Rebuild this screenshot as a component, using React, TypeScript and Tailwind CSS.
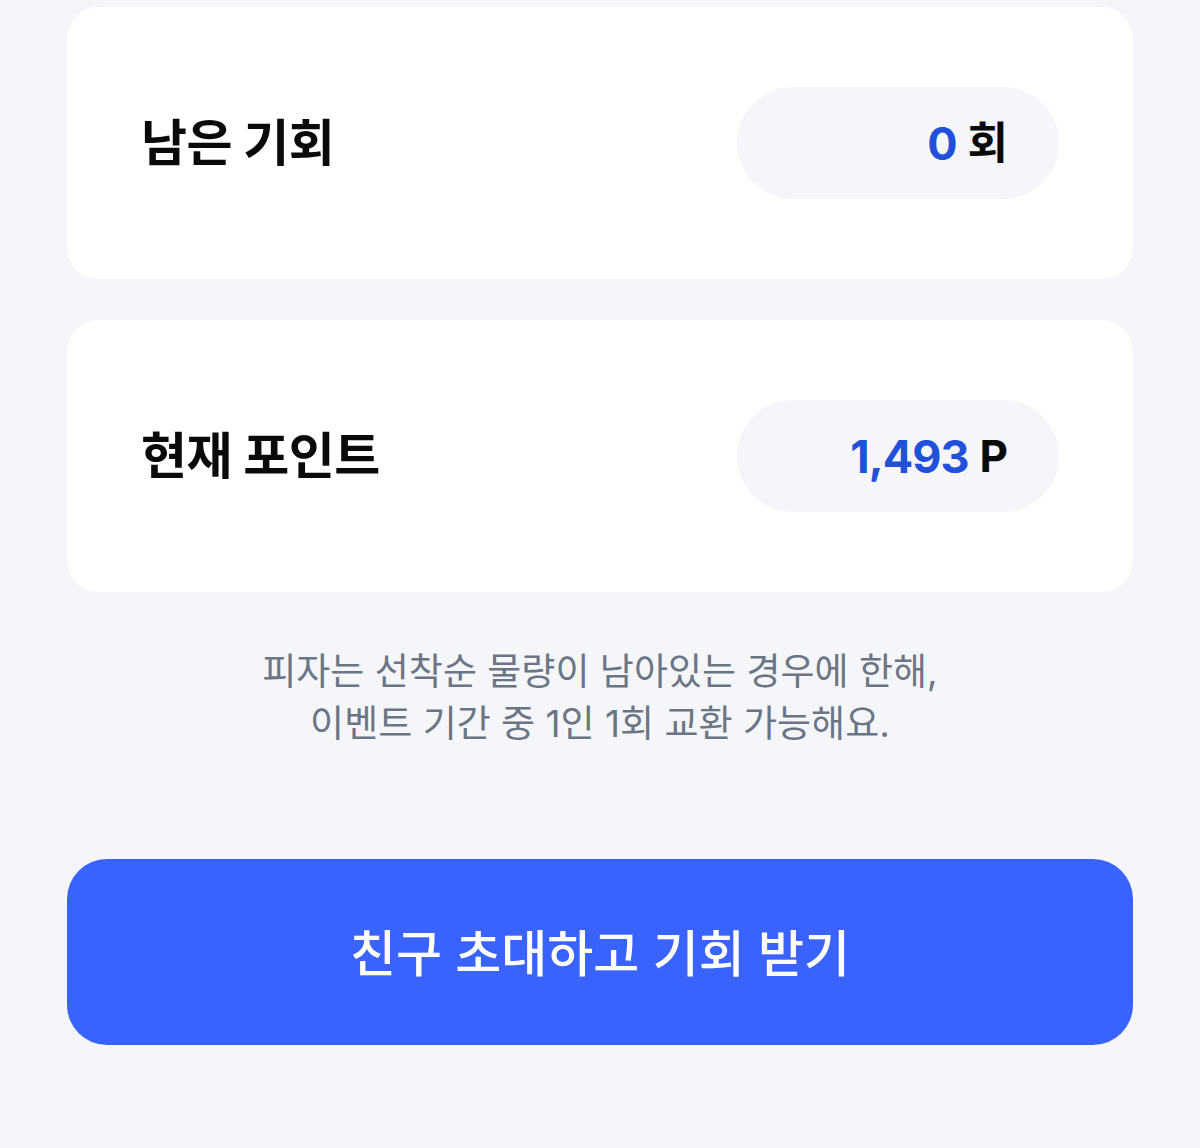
import React from "react";

const font = { fontFamily: '"Inter", "Noto Sans CJK KR", sans-serif' };

function Row({ label, value, unit }: { label: string; value: string; unit: string }) {
  return (
    <div className="flex items-center justify-between rounded-[32px] bg-white pl-[74px] pr-[74px] py-[80px]">
      <div className="text-[50px] font-bold leading-none tracking-[-0.5px] text-[#0a0a0a]">{label}</div>
      <div className="flex h-[112px] w-[322px] items-center justify-end rounded-full bg-[#f5f6fa] pr-[51px]">
        <span className="text-[45px] font-bold leading-none tracking-[-1px] text-[#2350d8]">{value}</span>
        <span className="ml-[11px] text-[44px] font-bold leading-none text-[#0a0a0a]">{unit}</span>
      </div>
    </div>
  );
}

export default function App() {
  return (
    <div className="min-h-[1148px] w-full bg-[#f5f6fa] px-[67px] pt-[7px]" style={font}>
      <div className="flex flex-col gap-[41px]">
        <Row label="남은 기회" value="0" unit="회" />
        <Row label="현재 포인트" value="1,493" unit="P" />
      </div>
      <p className="mt-[54px] text-center text-[37px] leading-[52px] text-[#6b7684]">
        피자는 선착순 물량이 남아있는 경우에 한해,
        <br />
        이벤트 기간 중 1인 1회 교환 가능해요.
      </p>
      <button className="mt-[109px] flex h-[186px] w-full items-center justify-center rounded-[40px] bg-[#3a63fd] pt-[4px] text-[50px] font-medium text-white">
        친구 초대하고 기회 받기
      </button>
    </div>
  );
}
